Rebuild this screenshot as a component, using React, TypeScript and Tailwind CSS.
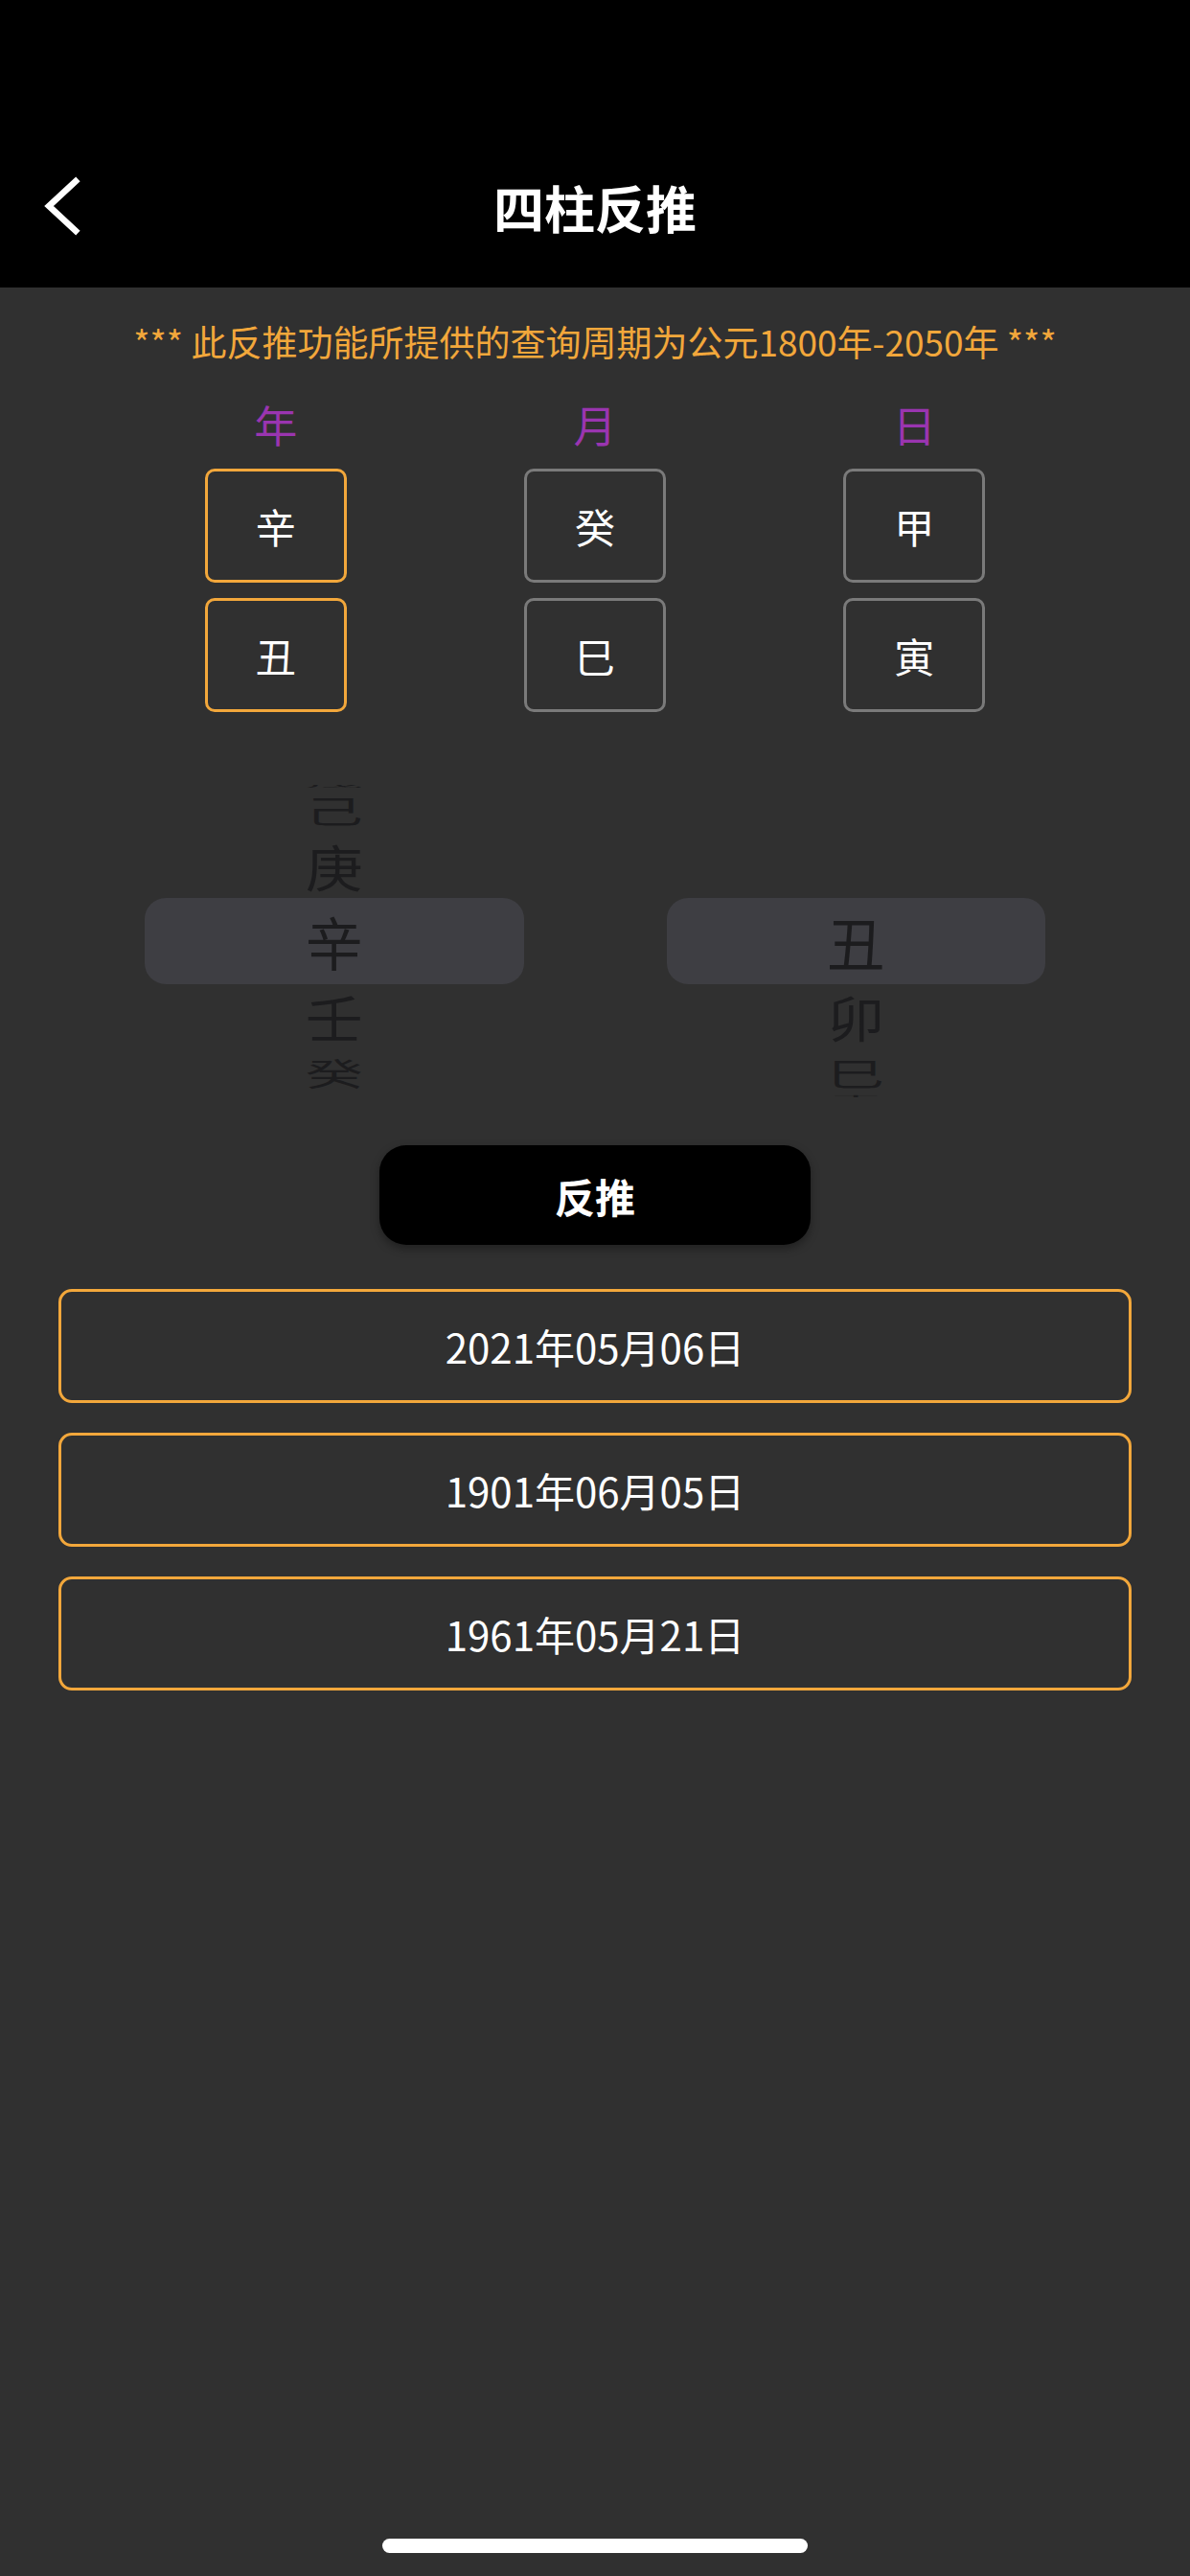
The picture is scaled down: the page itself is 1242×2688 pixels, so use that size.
import React from 'react';

const FONT = { fontFamily: '"Noto Sans CJK SC", "Noto Sans", sans-serif' };

// heavenly stems / earthly branches shown in the two wheels
const STEMS = ['甲', '乙', '丙', '丁', '戊', '己', '庚', '辛', '壬', '癸'];
const BRANCHES = ['丑', '卯', '巳', '未', '酉', '亥'];

const RESULTS = ['2021年05月06日', '1901年06月05日', '1961年05月21日'];

const PILLARS = [
  { label: '年', stem: '辛', branch: '丑', active: true },
  { label: '月', stem: '癸', branch: '巳', active: false },
  { label: '日', stem: '甲', branch: '寅', active: false },
];

// 3D wheel picker, rows bent round a drum of radius R
function Wheel({ items, selected }: { items: string[]; selected: number }) {
  const R = 163;
  const th = (28.6 * Math.PI) / 180;
  const rows = [];
  for (let k = -3; k <= 3; k++) {
    const a0 = Math.max(-Math.PI / 2, (k - 0.5) * th);
    const a1 = Math.min(Math.PI / 2, (k + 0.5) * th);
    const h = R * (Math.sin(a1) - Math.sin(a0));
    const slotCenter = (R * (Math.sin(a1) + Math.sin(a0))) / 2;
    const offset = R * Math.sin(k * th) - slotCenter;
    const scale = Math.max(0.05, Math.cos(k * th));
    const item = items[selected + k];
    rows.push(
      <div key={k} className="flex items-center justify-center" style={{ height: h }}>
        {item && (
          <span
            className="block text-[60px] leading-none text-[#1c1c1e]"
            style={{ transform: `translateY(${offset}px) scaleY(${scale})` }}
          >
            {item}
          </span>
        )}
      </div>
    );
  }
  return (
    <div className="relative flex-1 h-[326px] overflow-hidden">
      <div className="absolute inset-x-0 top-1/2 -translate-y-1/2 h-[90px] rounded-[22px] bg-[#3e3e43]" />
      <div className="relative flex flex-col">{rows}</div>
    </div>
  );
}

export default function App() {
  return (
    <div className="min-h-[2688px] w-[1242px] bg-[#303030] flex flex-col" style={FONT}>
      {/* Nav bar */}
      <header className="h-[300px] bg-black pt-[132px]">
        <div className="relative h-[168px] flex items-center justify-center">
          <svg className="absolute left-[42px] top-[50px]" width="46" height="66" viewBox="0 0 46 66" fill="none">
            <path d="M37 7 L9 33 L37 59" stroke="white" strokeWidth="6.5" strokeLinecap="square" strokeLinejoin="miter" />
          </svg>
          <h1 className="text-[53px] font-semibold text-white leading-none">四柱反推</h1>
        </div>
      </header>

      <p className="pt-[29px] text-center text-[37px] leading-[54px] text-[#f2a73b]">
        *** 此反推功能所提供的查询周期为公元1800年-2050年 ***
      </p>

      {/* Pillars */}
      <div className="mx-auto mt-[33px] w-[1000px] flex">
        {PILLARS.map((p) => (
          <div key={p.label} className="flex-1 flex flex-col items-center">
            <div className="text-[45px] leading-[54px] text-[#9a35b0]">{p.label}</div>
            <div className="mt-[19px] flex flex-col gap-[16px]">
              {[p.stem, p.branch].map((c) => (
                <div
                  key={c}
                  className={`w-[148px] h-[119px] rounded-[10px] border-[3px] flex items-center justify-center text-[42px] text-white ${
                    p.active ? 'border-[#f2a73b]' : 'border-[#7a7a7a]'
                  }`}
                >
                  {c}
                </div>
              ))}
            </div>
          </div>
        ))}
      </div>

      {/* Wheels */}
      <div className="mt-[76px] px-[151px] flex gap-[149px]">
        <Wheel items={STEMS} selected={7} />
        <Wheel items={BRANCHES} selected={0} />
      </div>

      <button className="mx-auto mt-[50px] w-[450px] h-[104px] rounded-[28px] bg-black text-white text-[42px] font-bold shadow-[0_4px_10px_rgba(0,0,0,0.35)]">
        反推
      </button>

      {/* Results */}
      <div className="mt-[46px] px-[61px] flex flex-col gap-[31px]">
        {RESULTS.map((r) => (
          <div
            key={r}
            className="h-[119px] rounded-[14px] border-[3px] border-[#f2a73b] flex items-center justify-center text-[42px] text-white"
          >
            {r}
          </div>
        ))}
      </div>

      <div className="mt-auto mb-[24px] mx-auto w-[444px] h-[15px] rounded-full bg-white" />
    </div>
  );
}
